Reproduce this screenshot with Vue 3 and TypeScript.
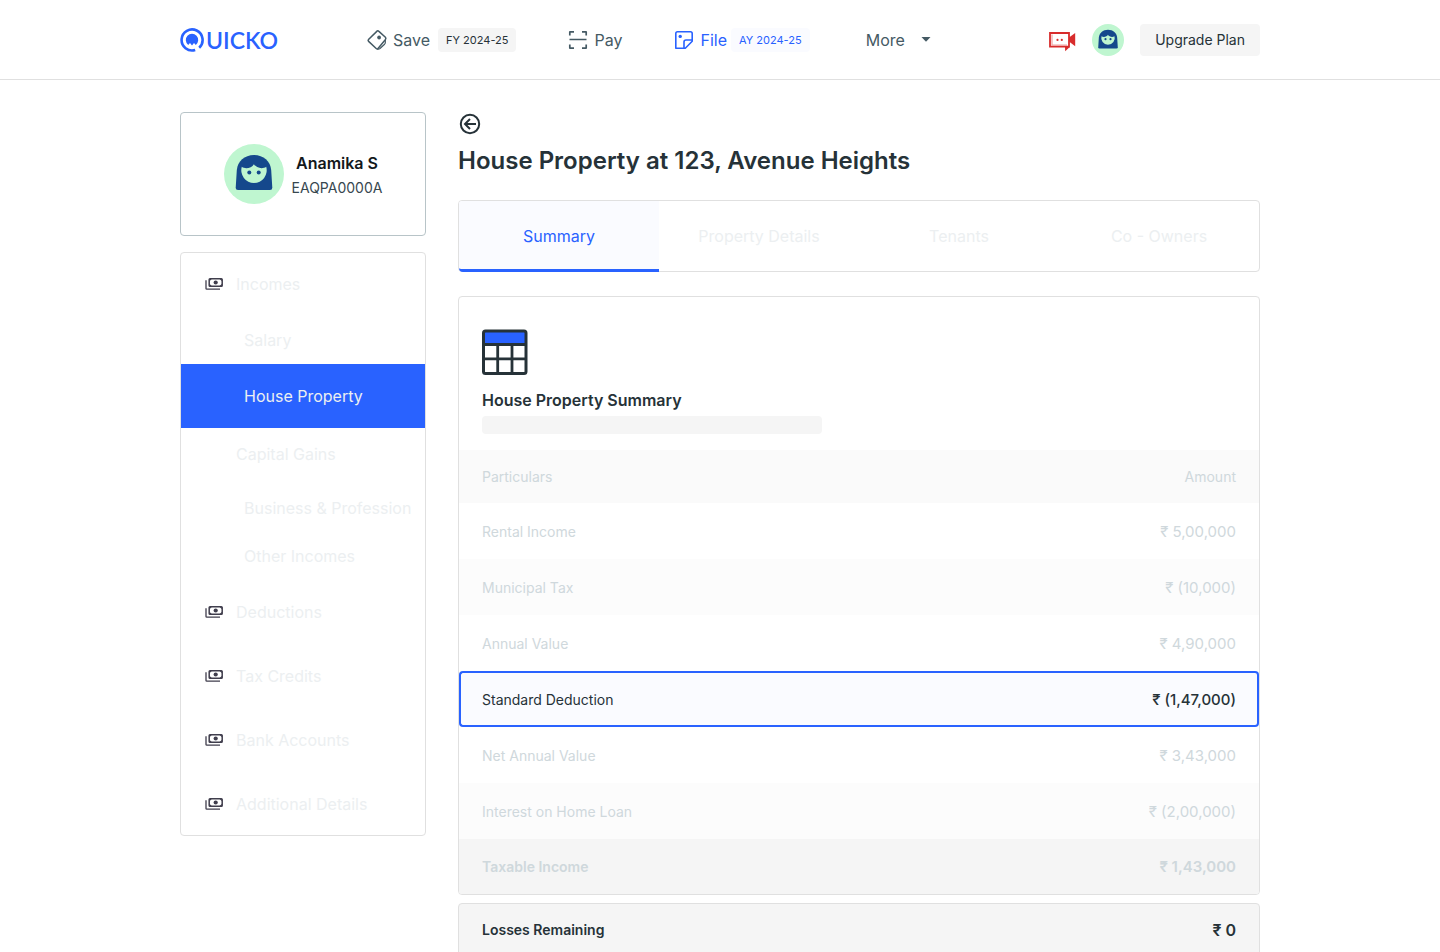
<script setup lang="ts">
import { ref } from 'vue'

interface MenuItem {
  label: string
  kind: 'group' | 'child' | 'active' | 'section'
}

interface Row {
  label: string
  amount: string
  state?: 'shaded' | 'highlight' | 'total'
}

const menu: MenuItem[] = [
  { label: 'Incomes', kind: 'group' },
  { label: 'Salary', kind: 'child' },
  { label: 'House Property', kind: 'active' },
  { label: 'Capital Gains', kind: 'section' },
  { label: 'Business & Profession', kind: 'child' },
  { label: 'Other Incomes', kind: 'child' },
  { label: 'Deductions', kind: 'group' },
  { label: 'Tax Credits', kind: 'group' },
  { label: 'Bank Accounts', kind: 'group' },
  { label: 'Additional Details', kind: 'group' },
]

const tabs = ['Summary', 'Property Details', 'Tenants', 'Co - Owners']
const activeTab = ref('Summary')

const rows: Row[] = [
  { label: 'Rental Income', amount: '₹ 5,00,000' },
  { label: 'Municipal Tax', amount: '₹ (10,000)', state: 'shaded' },
  { label: 'Annual Value', amount: '₹ 4,90,000' },
  { label: 'Standard Deduction', amount: '₹ (1,47,000)', state: 'highlight' },
  { label: 'Net Annual Value', amount: '₹ 3,43,000' },
  { label: 'Interest on Home Loan', amount: '₹ (2,00,000)', state: 'shaded' },
  { label: 'Taxable Income', amount: '₹ 1,43,000', state: 'total' },
]
</script>

<template>
  <div class="page">
    <svg class="defs" aria-hidden="true">
      <symbol id="avatar" viewBox="0 0 60 60">
        <circle cx="30" cy="30" r="30" fill="#bff6d0" />
        <path d="M30 11C39.500 11 46.500 17.500 47.200 26L48.300 43.500Q48.400 46 46 46H14Q11.600 46 11.700 43.500L12.800 26C13.500 17.500 20.500 11 30 11Z" fill="#15488c" />
        <path d="M17.800 22.800C21.500 25.600 27.700 24 29.900 20.200C32.100 24 38.500 25.600 42.200 22.800A12.700 12.700 0 1 1 17.800 22.800Z" fill="#bff6d0" />
        <circle cx="25.300" cy="28.400" r="2" fill="#15488c" />
        <circle cx="34.700" cy="28.400" r="2" fill="#15488c" />
      </symbol>
    </svg>

    <header class="topbar">
      <div class="container bar">
        <a class="logo" href="#" aria-label="Quicko home">
          <svg width="24" height="24" viewBox="0 0 24 24" aria-hidden="true">
            <path d="M15.200 22A10.500 10.500 0 1 1 19.200 19.700" fill="none" stroke="#2962ff" stroke-width="2.600" />
            <path d="M8.200 16.900A6.200 6.200 0 1 1 15.800 16.900L14 15L12 17.400L10 15Z" fill="#2962ff" />
          </svg>
          <span>UICKO</span>
        </a>

        <nav class="nav" aria-label="Products">
          <a class="nav-link" href="#">
            <svg width="24" height="24" viewBox="0 0 24 24" fill="none" stroke="currentColor" stroke-width="1.500" stroke-linejoin="round" aria-hidden="true">
              <path d="M12.300 2.900Q13 2.500 13.600 3.100L20.400 9.300Q21.300 10.300 20.500 11.400L13 20.500Q12.200 21.400 11.200 20.500L3.600 13.400Q2.700 12.400 3.500 11.500Z" />
              <path d="M20.300 11.700V14.800Q20.200 15.600 19.600 16.200L15 20.500Q13.600 21.600 12.200 20.900" stroke-width="1.200" />
              <circle cx="14.100" cy="9.500" r="1.900" fill="currentColor" stroke="none" />
            </svg>
            <span>Save</span>
            <span class="pill">FY 2024-25</span>
          </a>
          <a class="nav-link" href="#">
            <svg width="24" height="24" viewBox="0 0 24 24" fill="none" stroke="currentColor" stroke-width="1.700" aria-hidden="true">
              <path d="M3.800 7.500V4Q3.800 3.800 4 3.800H8M16 3.800H20Q20.200 3.800 20.200 4V7.500M20.200 16.500V20Q20.200 20.200 20 20.200H16M8 20.200H4Q3.800 20.200 3.800 20V16.500M3.500 11.500H20.500" />
            </svg>
            <span>Pay</span>
          </a>
          <a class="nav-link current" href="#" aria-current="page">
            <svg width="24" height="24" viewBox="0 0 24 24" fill="none" stroke="currentColor" stroke-width="1.600" stroke-linejoin="round" aria-hidden="true">
              <path d="M5.500 3.800H18.500Q20.200 3.800 20.200 5.500V13.300L13.300 20.200H3.800V5.500Q3.800 3.800 5.500 3.800Z" />
              <path d="M20.200 12H14Q12 12 12 14V20.200" />
              <circle cx="8.200" cy="8.400" r="1.700" fill="currentColor" stroke="none" />
            </svg>
            <span>File</span>
            <span class="pill">AY 2024-25</span>
          </a>
          <button class="more" type="button">
            <span>More</span>
            <svg width="10" height="5" viewBox="0 0 10 5" aria-hidden="true"><path d="M0.500 0H9.500L5 4.800Z" fill="currentColor" /></svg>
          </button>
        </nav>

        <div class="actions">
          <button class="icon-btn" type="button" aria-label="Video support">
            <svg width="27" height="24" viewBox="0 -4 27 24" aria-hidden="true">
              <path d="M3 2.500V13H18" fill="none" stroke="#f2a3a3" stroke-width="1.200" />
              <path d="M1 1H20V14.600H1Z" fill="none" stroke="#d82c2c" stroke-width="1.800" />
              <path d="M16 15H20.800L16.200 19.300Z" fill="#d82c2c" />
              <path d="M26.200 0.900V14.200L20 9.500V5.500Z" fill="#d82c2c" />
              <circle cx="8.500" cy="7.900" r="1.100" fill="#d82c2c" />
              <circle cx="12.800" cy="7.900" r="1.100" fill="#d82c2c" />
            </svg>
          </button>
          <button class="icon-btn" type="button" aria-label="Account">
            <svg width="32" height="32" aria-hidden="true"><use href="#avatar" /></svg>
          </button>
          <button class="upgrade" type="button">Upgrade Plan</button>
        </div>
      </div>
    </header>

    <div class="container content">
      <aside class="side">
        <section class="profile">
          <svg width="60" height="60" aria-hidden="true"><use href="#avatar" /></svg>
          <div class="who">
            <strong>Anamika S</strong>
            <span>EAQPA0000A</span>
          </div>
        </section>

        <nav class="menu" aria-label="Return sections">
          <a v-for="item in menu" :key="item.label" href="#" :class="['menu-item', item.kind]">
            <svg v-if="item.kind === 'group'" width="19" height="12" viewBox="0 0 19 12" aria-hidden="true">
              <rect x="4.200" y="0.800" width="13" height="7.400" rx="0.800" fill="none" stroke="#403e4d" stroke-width="1.500" />
              <path d="M4.500 1H6.700L4.500 3.200ZM16.900 1V3.200L14.700 1ZM4.500 8V5.800L6.700 8ZM16.900 8H14.700L16.900 5.800Z" fill="#403e4d" />
              <circle cx="10.700" cy="4.500" r="2.100" fill="#403e4d" />
              <path d="M1 2.300V10.400Q1 11.200 1.800 11.200H15" fill="none" stroke="#403e4d" stroke-width="1.300" />
            </svg>
            <span>{{ item.label }}</span>
          </a>
        </nav>
      </aside>

      <main class="main">
        <button class="back" type="button" aria-label="Back">
          <svg width="24" height="24" viewBox="0 0 24 24" fill="none" stroke="#263238" stroke-width="2" aria-hidden="true">
            <circle cx="12" cy="12" r="9.200" />
            <path d="M18 12H7.500M12 7L7 12L12 17" />
          </svg>
        </button>
        <h1>House Property at 123, Avenue Heights</h1>

        <div class="tabs" role="tablist">
          <button
            v-for="tab in tabs"
            :key="tab"
            type="button"
            role="tab"
            :aria-selected="tab === activeTab"
            :class="['tab', { selected: tab === activeTab }]"
            @click="activeTab = tab"
          >
            {{ tab }}
          </button>
        </div>

        <section class="card">
          <div class="card-head">
            <svg width="46" height="46" viewBox="0 0 46 46" aria-hidden="true">
              <rect x="1.500" y="2" width="42.500" height="42.500" rx="2" fill="#fff" />
              <rect x="2" y="2" width="42" height="13" fill="#2962ff" />
              <path d="M2 15.500H44M2 29.800H44M15.700 15.500V44M30 15.500V44" fill="none" stroke="#263238" stroke-width="2.800" />
              <rect x="1.500" y="2" width="42.500" height="42.500" rx="2" fill="none" stroke="#263238" stroke-width="3" />
            </svg>
            <h2>House Property Summary</h2>
            <div class="placeholder"></div>
          </div>
          <table>
            <thead>
              <tr>
                <th scope="col">Particulars</th>
                <th scope="col" class="amount">Amount</th>
              </tr>
            </thead>
            <tbody>
              <tr v-for="row in rows" :key="row.label" :class="row.state">
                <td>{{ row.label }}</td>
                <td class="amount">{{ row.amount }}</td>
              </tr>
            </tbody>
          </table>
        </section>

        <section class="losses">
          <span>Losses Remaining</span>
          <span class="value">₹ 0</span>
        </section>
      </main>
    </div>
  </div>
</template>

<style>
body {
  background: #fff;
}
</style>

<style scoped>
.page {
  height: 100vh;
  overflow: hidden;
  background: #fff;
  color: #263238;
  font-family: Inter, "Liberation Sans", sans-serif;
  font-size: 16px;
  line-height: 24px;
}
.page *,
.page *::before {
  box-sizing: border-box;
}
.defs {
  display: none;
}
svg {
  display: block;
  flex: none;
}
button {
  border: 0;
  padding: 0;
  background: none;
  color: inherit;
  font: inherit;
  cursor: pointer;
}
a {
  color: inherit;
  text-decoration: none;
}
.container {
  max-width: 1080px;
  margin: 0 auto;
}
.topbar {
  border-bottom: 1px solid #e0e0e0;
}
.bar {
  display: flex;
  align-items: center;
  height: 79px;
}
.logo {
  display: flex;
  align-items: center;
  gap: 2px;
  width: 185px;
  color: #2962ff;
  font-family: Lato, sans-serif;
  font-size: 23px;
  font-weight: 600;
}
.nav {
  display: flex;
  align-items: center;
  gap: 50px;
  color: #455a64;
}
.nav-link {
  display: flex;
  align-items: center;
  gap: 4px;
}
.pill {
  margin-left: 4px;
  padding: 0 8px;
  border-radius: 4px;
  background: #f5f5f5;
  color: #263238;
  font-size: 11px;
}
.current,
.current .pill {
  color: #2962ff;
}
.current .pill {
  margin-left: 0;
  background: #fafbff;
}
.more {
  display: flex;
  align-items: center;
  gap: 16px;
  margin-left: 6px;
}
.actions {
  display: flex;
  align-items: center;
  gap: 16px;
  margin-left: auto;
}
.upgrade {
  height: 32px;
  padding: 0 15px;
  border-radius: 4px;
  background: #f5f5f5;
  font-size: 14px;
}
.content {
  display: flex;
  align-items: flex-start;
  gap: 32px;
  padding-top: 32px;
}
.side {
  display: flex;
  flex-direction: column;
  gap: 16px;
  flex: 0 0 246px;
}
.profile {
  display: flex;
  align-items: center;
  justify-content: center;
  gap: 8px;
  padding: 31px 0;
  border: 1px solid #b8c4c8;
  border-radius: 4px;
}
.who {
  display: flex;
  flex-direction: column;
  align-items: center;
  gap: 1px;
  padding-top: 2px;
}
.who strong {
  color: #12181b;
  font-weight: 600;
}
.who span {
  color: #37474f;
  font-size: 14px;
}
.menu {
  border: 1px solid #e0e0e0;
  border-radius: 4px;
}
.menu-item {
  display: flex;
  align-items: center;
  gap: 12px;
  height: 64px;
  padding-left: 24px;
  color: #eceff1;
  white-space: nowrap;
}
.menu-item:first-child {
  height: 63px;
  padding-bottom: 1px;
}
.menu-item:last-child {
  height: 63px;
}
.child {
  height: 48px;
  padding-left: 63px;
}
.active {
  padding-left: 63px;
  background: #2962ff;
}
.section {
  height: 56px;
  padding-bottom: 4px;
  padding-left: 55px;
}
.main {
  flex: 1;
  min-width: 0;
}
.back {
  display: block;
}
h1 {
  margin: 9px 0 23px;
  font-size: 24px;
  font-weight: 600;
  line-height: 32px;
}
.tabs {
  display: flex;
  height: 72px;
  margin-bottom: 24px;
  border: 1px solid #e0e0e0;
  border-radius: 4px;
}
.tab {
  flex: 1;
  color: #eceff1;
}
.selected {
  margin-bottom: -1px;
  padding-top: 2px;
  border-bottom: 3px solid #2962ff;
  border-radius: 3px 0 0 4px;
  background: #fafbff;
  color: #2962ff;
}
.card {
  border: 1px solid #e0e0e0;
  border-radius: 4px;
  overflow: hidden;
}
.card-head {
  padding: 32px 23px 16px;
}
h2 {
  margin: 13px 0 4px;
  font-size: 16px;
  font-weight: 600;
  line-height: 24px;
}
.placeholder {
  max-width: 340px;
  height: 18px;
  border-radius: 4px;
  background: #f5f5f5;
}
table {
  width: 100%;
  border-spacing: 0;
  color: #cfd8dc;
  font-size: 14px;
}
th {
  height: 53px;
  padding: 0 23px;
  background: #fafafa;
  font-weight: 400;
  text-align: left;
}
td {
  height: 56px;
  padding: 1px 23px 0;
}
th.amount,
td.amount {
  text-align: right;
}
td.amount {
  font-size: 15px;
}
.shaded td {
  background: #fcfcfc;
}
.highlight td {
  border: solid #2962ff;
  border-width: 2px 0;
  background: #fafbff;
  color: #263238;
}
.highlight td:first-child {
  padding-left: 21px;
  border-left-width: 2px;
  border-radius: 4px 0 0 4px;
}
.highlight td:last-child {
  padding-right: 21px;
  border-right-width: 2px;
  border-radius: 0 4px 4px 0;
  font-weight: 500;
}
.total td {
  height: 55px;
  background: #f5f5f5;
  font-weight: 600;
}
.losses {
  display: flex;
  align-items: center;
  justify-content: space-between;
  height: 54px;
  margin-top: 8px;
  padding: 0 23px;
  border: 1px solid #e0e0e0;
  border-radius: 4px;
  background: #f5f5f5;
  font-size: 14px;
  font-weight: 600;
}
.value {
  font-size: 16px;
}
</style>
